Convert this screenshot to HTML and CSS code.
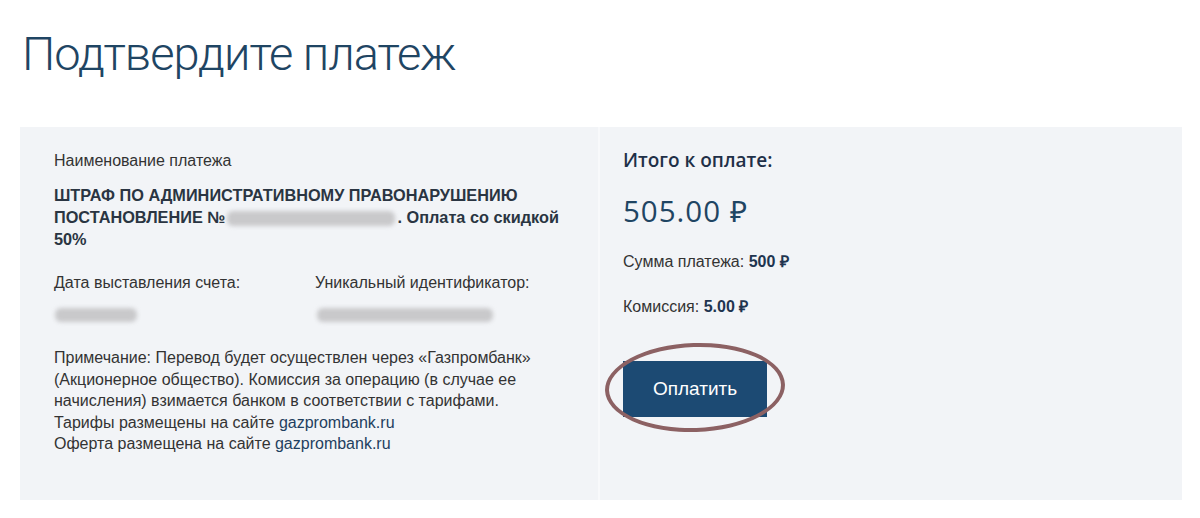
FILE: index.html
```html
<!DOCTYPE html>
<html lang="ru">
<head>
<meta charset="utf-8">
<title>Подтвердите платеж</title>
<link rel="stylesheet" href="styles.css">
</head>
<body>
<div class="page">
  <h1 class="title">Подтвердите платеж</h1>
  <div class="panels">
    <section class="panel details">
      <div class="label">Наименование платежа</div>
      <div class="payname">ШТРАФ ПО АДМИНИСТРАТИВНОМУ ПРАВОНАРУШЕНИЮ ПОСТАНОВЛЕНИЕ №<span class="blur blur-num"></span>. Оплата со скидкой 50%</div>
      <div class="meta">
        <div class="meta-col col-date">
          <div class="label">Дата выставления счета:</div>
          <div class="blur blur-date"></div>
        </div>
        <div class="meta-col">
          <div class="label">Уникальный идентификатор:</div>
          <div class="blur blur-id"></div>
        </div>
      </div>
      <p class="note">Примечание: Перевод будет осуществлен через «Газпромбанк» (Акционерное общество). Комиссия за операцию (в случае ее начисления) взимается банком в соответствии с тарифами.<br>Тарифы размещены на сайте <a class="link" href="#">gazprombank.ru</a><br>Оферта размещена на сайте <a class="link" href="#">gazprombank.ru</a></p>
    </section>
    <section class="panel summary">
      <div class="total-label">Итого к оплате:</div>
      <div class="total">505.00 ₽</div>
      <div class="line">Сумма платежа: <b>500 ₽</b></div>
      <div class="line">Комиссия: <b>5.00 ₽</b></div>
      <div class="btn-wrap">
        <button class="pay">Оплатить</button>
        <span class="circle"></span>
      </div>
    </section>
  </div>
</div>
</body>
</html>
```

FILE: styles.css
```css
* { box-sizing: border-box; }
html, body { margin: 0; padding: 0; background: #fff; }
body {
  font-family: "Liberation Sans", Arial, sans-serif;
  color: #333;
}
.page {
  padding: 0 18px 0 20px;
}
.title {
  margin: 0;
  padding: 24px 0 0 2px;
  height: 127px;
  font-family: Roboto, "Noto Sans", sans-serif;
  font-weight: 300;
  font-size: 47px;
  line-height: 60px;
  color: #1f4563;
  letter-spacing: -1px;
}
.panels {
  display: flex;
  gap: 2px;
  height: 373px;
  background: #f8f9fb;
}
.panel {
  background: #f2f4f7;
}
.details {
  width: 578px;
  padding: 24px 26px 0 34px;
}
.summary {
  width: 582px;
  padding: 20px 20px 0 23px;
}
.label {
  font-size: 16px;
  line-height: 20px;
  color: #333;
}
.payname {
  margin-top: 13px;
  font-size: 16.3px;
  line-height: 22px;
  font-weight: 700;
  color: #2a3542;
}
.blur {
  display: inline-block;
  background: #c9c9cb;
  border-radius: 6px;
  filter: blur(2px);
  vertical-align: middle;
}
.blur-num { width: 168px; height: 15px; margin: 0 2px 0 2px; }
.meta {
  display: flex;
  margin-top: 23px;
}
.meta-col { display: flex; flex-direction: column; }
.col-date { width: 261px; }
.blur-date { width: 82px; height: 14px; margin-top: 15px; margin-left: 1px; }
.blur-id { width: 176px; height: 14px; margin-top: 15px; margin-left: 2px; }
.note {
  margin: 25px 0 0;
  font-size: 16px;
  line-height: 21.5px;
  color: #333;
}
.link { color: #1f3f60; text-decoration: none; }
.total-label {
  font-family: "Open Sans", sans-serif;
  font-weight: 600;
  font-size: 19px;
  line-height: 26px;
  color: #1f3048;
}
.total {
  margin-top: 19px;
  font-family: "Open Sans", sans-serif;
  font-weight: 500;
  font-size: 29.5px;
  line-height: 38px;
  letter-spacing: 1px;
  color: #1f4563;
}
.line {
  font-size: 16px;
  line-height: 20px;
  color: #333;
  margin-top: 22px;
}
.line + .line { margin-top: 25px; }
.line b { color: #1f3550; }
.btn-wrap {
  position: relative;
  display: inline-block;
  margin-top: 44px;
}
.pay {
  display: block;
  width: 144px;
  height: 56px;
  border: 0;
  background: #1c4a73;
  color: #fff;
  font-family: "Liberation Sans", Arial, sans-serif;
  font-size: 19px;
}
.circle {
  position: absolute;
  left: -18px;
  right: -18px;
  top: -18px;
  bottom: -15px;
  border: 4px solid #8c6163;
  border-radius: 50%;
  transform: rotate(-2deg);
}
```
